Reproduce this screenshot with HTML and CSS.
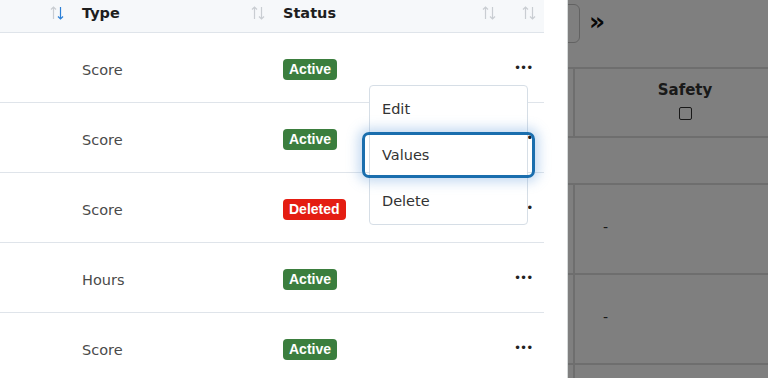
FILE: index.html
```html
<!DOCTYPE html>
<html lang="en">
<head>
  <meta charset="UTF-8" />
  <title>Metrics</title>
  <link rel="stylesheet" href="styles.css">
</head>
<body>

  <!-- Page behind the drawer -->
  <div class="page">
    <div class="toolbar">
      <div class="page-btn"></div>
      <span class="next">&raquo;</span>
    </div>
    <div class="grid">
      <div class="grid-row grid-head">
        <div class="cell"></div>
        <div class="cell col-safety">
          <span>Safety</span>
          <span class="check"></span>
        </div>
      </div>
      <div class="grid-row grid-filter"></div>
      <div class="grid-row grid-body">
        <div class="cell"></div>
        <div class="cell col-safety">-</div>
      </div>
      <div class="grid-row grid-body">
        <div class="cell"></div>
        <div class="cell col-safety">-</div>
      </div>
      <div class="grid-row grid-body">
        <div class="cell"></div>
        <div class="cell col-safety"></div>
      </div>
    </div>
  </div>

  <div class="backdrop"></div>

  <!-- Drawer -->
  <aside class="drawer">
    <div class="table">
      <div class="row head">
        <div class="th"><span></span>
          <svg class="sort" viewBox="0 0 14 16"><path d="M3.5 2v12M1 4.5 3.5 2 6 4.5" stroke="#c9cdd2"/><path d="M10.5 2v12M8 11.5l2.5 2.5 2.5-2.5" stroke="#2b7fd6"/></svg>
        </div>
        <div class="th"><span>Type</span>
          <svg class="sort" viewBox="0 0 14 16"><path d="M3.5 2v12M1 4.5 3.5 2 6 4.5M10.5 2v12M8 11.5l2.5 2.5 2.5-2.5" stroke="#c9cdd2"/></svg>
        </div>
        <div class="th"><span>Status</span>
          <svg class="sort" viewBox="0 0 14 16"><path d="M3.5 2v12M1 4.5 3.5 2 6 4.5M10.5 2v12M8 11.5l2.5 2.5 2.5-2.5" stroke="#c9cdd2"/></svg>
        </div>
        <div class="th"><span></span>
          <svg class="sort" viewBox="0 0 14 16"><path d="M3.5 2v12M1 4.5 3.5 2 6 4.5M10.5 2v12M8 11.5l2.5 2.5 2.5-2.5" stroke="#c9cdd2"/></svg>
        </div>
      </div>

      <div class="row">
        <div class="td"></div>
        <div class="td">Score</div>
        <div class="td"><span class="badge active">Active</span></div>
        <div class="td dots">&bull;&bull;&bull;</div>
      </div>
      <div class="row">
        <div class="td"></div>
        <div class="td">Score</div>
        <div class="td"><span class="badge active">Active</span></div>
        <div class="td dots">&bull;&bull;&bull;</div>
      </div>
      <div class="row">
        <div class="td"></div>
        <div class="td">Score</div>
        <div class="td"><span class="badge deleted">Deleted</span></div>
        <div class="td dots">&bull;&bull;&bull;</div>
      </div>
      <div class="row">
        <div class="td"></div>
        <div class="td">Hours</div>
        <div class="td"><span class="badge active">Active</span></div>
        <div class="td dots">&bull;&bull;&bull;</div>
      </div>
      <div class="row">
        <div class="td"></div>
        <div class="td">Score</div>
        <div class="td"><span class="badge active">Active</span></div>
        <div class="td dots">&bull;&bull;&bull;</div>
      </div>
    </div>

    <!-- Row actions menu -->
    <ul class="menu">
      <li>Edit</li>
      <li class="focused">Values</li>
      <li>Delete</li>
    </ul>
  </aside>

</body>
</html>
```

FILE: styles.css
```css
* {
  box-sizing: border-box;
  margin: 0;
  padding: 0;
}

body {
  font-family: 'DejaVu Sans', sans-serif;
  font-size: 14px;
  background: #fff;
  color: #333;
  overflow: hidden;
  height: 378px;
}

/* page behind */

.toolbar {
  height: 67px;
  display: flex;
  align-items: flex-start;
  padding: 4px 0 0 500px;
  gap: 9px;
}

.page-btn {
  flex-shrink: 0;
  width: 80px;
  height: 39px;
  border: 1px solid #c4c4c4;
  border-radius: 6px;
}

.next {
  font-size: 25px;
  line-height: 36px;
  font-weight: bold;
  color: #111;
}

.grid {
  border-top: 2px solid #dcdcdc;
}

.grid-row {
  display: flex;
  border-bottom: 2px solid #dcdcdc;
}

.grid-row .cell {
  flex-shrink: 0;
}

.grid-row .cell:first-child {
  width: 573px;
}

.col-safety {
  width: 222px;
  border-left: 2px solid #dcdcdc;
}

.grid-head {
  height: 69px;
}

.grid-head .col-safety {
  display: flex;
  flex-direction: column;
  align-items: center;
  padding-top: 12px;
  font-size: 15px;
  font-weight: 600;
  color: #333;
}

.check {
  width: 13px;
  height: 13px;
  border: 1px solid #333;
  border-radius: 2px;
  margin-top: 8px;
}

.grid-filter {
  height: 47px;
}

.grid-body {
  height: 90px;
}

.grid-body .col-safety {
  padding: 34px 0 0 28px;
  color: #333;
}

.backdrop {
  position: fixed;
  top: 0; left: 0;
  width: 100%; height: 100%;
  background: rgba(0, 0, 0, 0.5);
}

/* drawer */

.drawer {
  position: fixed;
  top: 0; left: 0;
  width: 568px;
  height: 100%;
  background: #fff;
  border-right: 1px solid #d6dada;
}

.table {
  width: 544px;
  margin-top: -6px;
}

.row {
  display: grid;
  grid-template-columns: 70px 201px 231px 42px;
  height: 70px;
  border-bottom: 1px solid #dfe4ea;
}

.row.head {
  height: 39px;
  background: #f6f8fa;
}

.th {
  display: flex;
  align-items: center;
  justify-content: space-between;
  padding: 0 6px 0 12px;
  font-weight: 600;
  font-size: 14.5px;
  color: #1e1e1e;
}

.th:last-child {
  padding-right: 8px;
}

.sort {
  width: 14px;
  height: 16px;
  fill: none;
  stroke-width: 1.2;
}

.td {
  display: flex;
  align-items: center;
  padding: 4px 0 0 12px;
  color: #4a4a4a;
  font-size: 14.5px;
}

.badge {
  font-family: 'Liberation Sans', Arial, sans-serif;
  font-weight: bold;
  font-size: 14px;
  color: #fff;
  padding: 0 6px;
  height: 21px;
  line-height: 21px;
  border-radius: 4px;
}

.badge.active {
  background: #3b7e3e;
}

.badge.deleted {
  background: #e41d12;
}

.dots {
  padding: 1px 0 0 12px;
  font-size: 12px;
  letter-spacing: -1px;
  color: #222;
}

.menu {
  position: absolute;
  top: 85px;
  left: 369px;
  width: 159px;
  list-style: none;
  background: #fff;
  border: 1px solid #d6dee6;
  border-radius: 4px;
}

.menu li {
  height: 46px;
  line-height: 46px;
  padding-left: 12px;
  font-size: 14.5px;
  color: #333;
}

.menu li.focused {
  position: relative;
}

.menu li.focused::after {
  content: "";
  position: absolute;
  top: 0; bottom: 0;
  left: -8px; right: -8px;
  border: 3px solid #1a6eae;
  border-radius: 7px;
  box-shadow: 0 0 12px 4px rgba(90, 150, 215, 0.35);
}
```
